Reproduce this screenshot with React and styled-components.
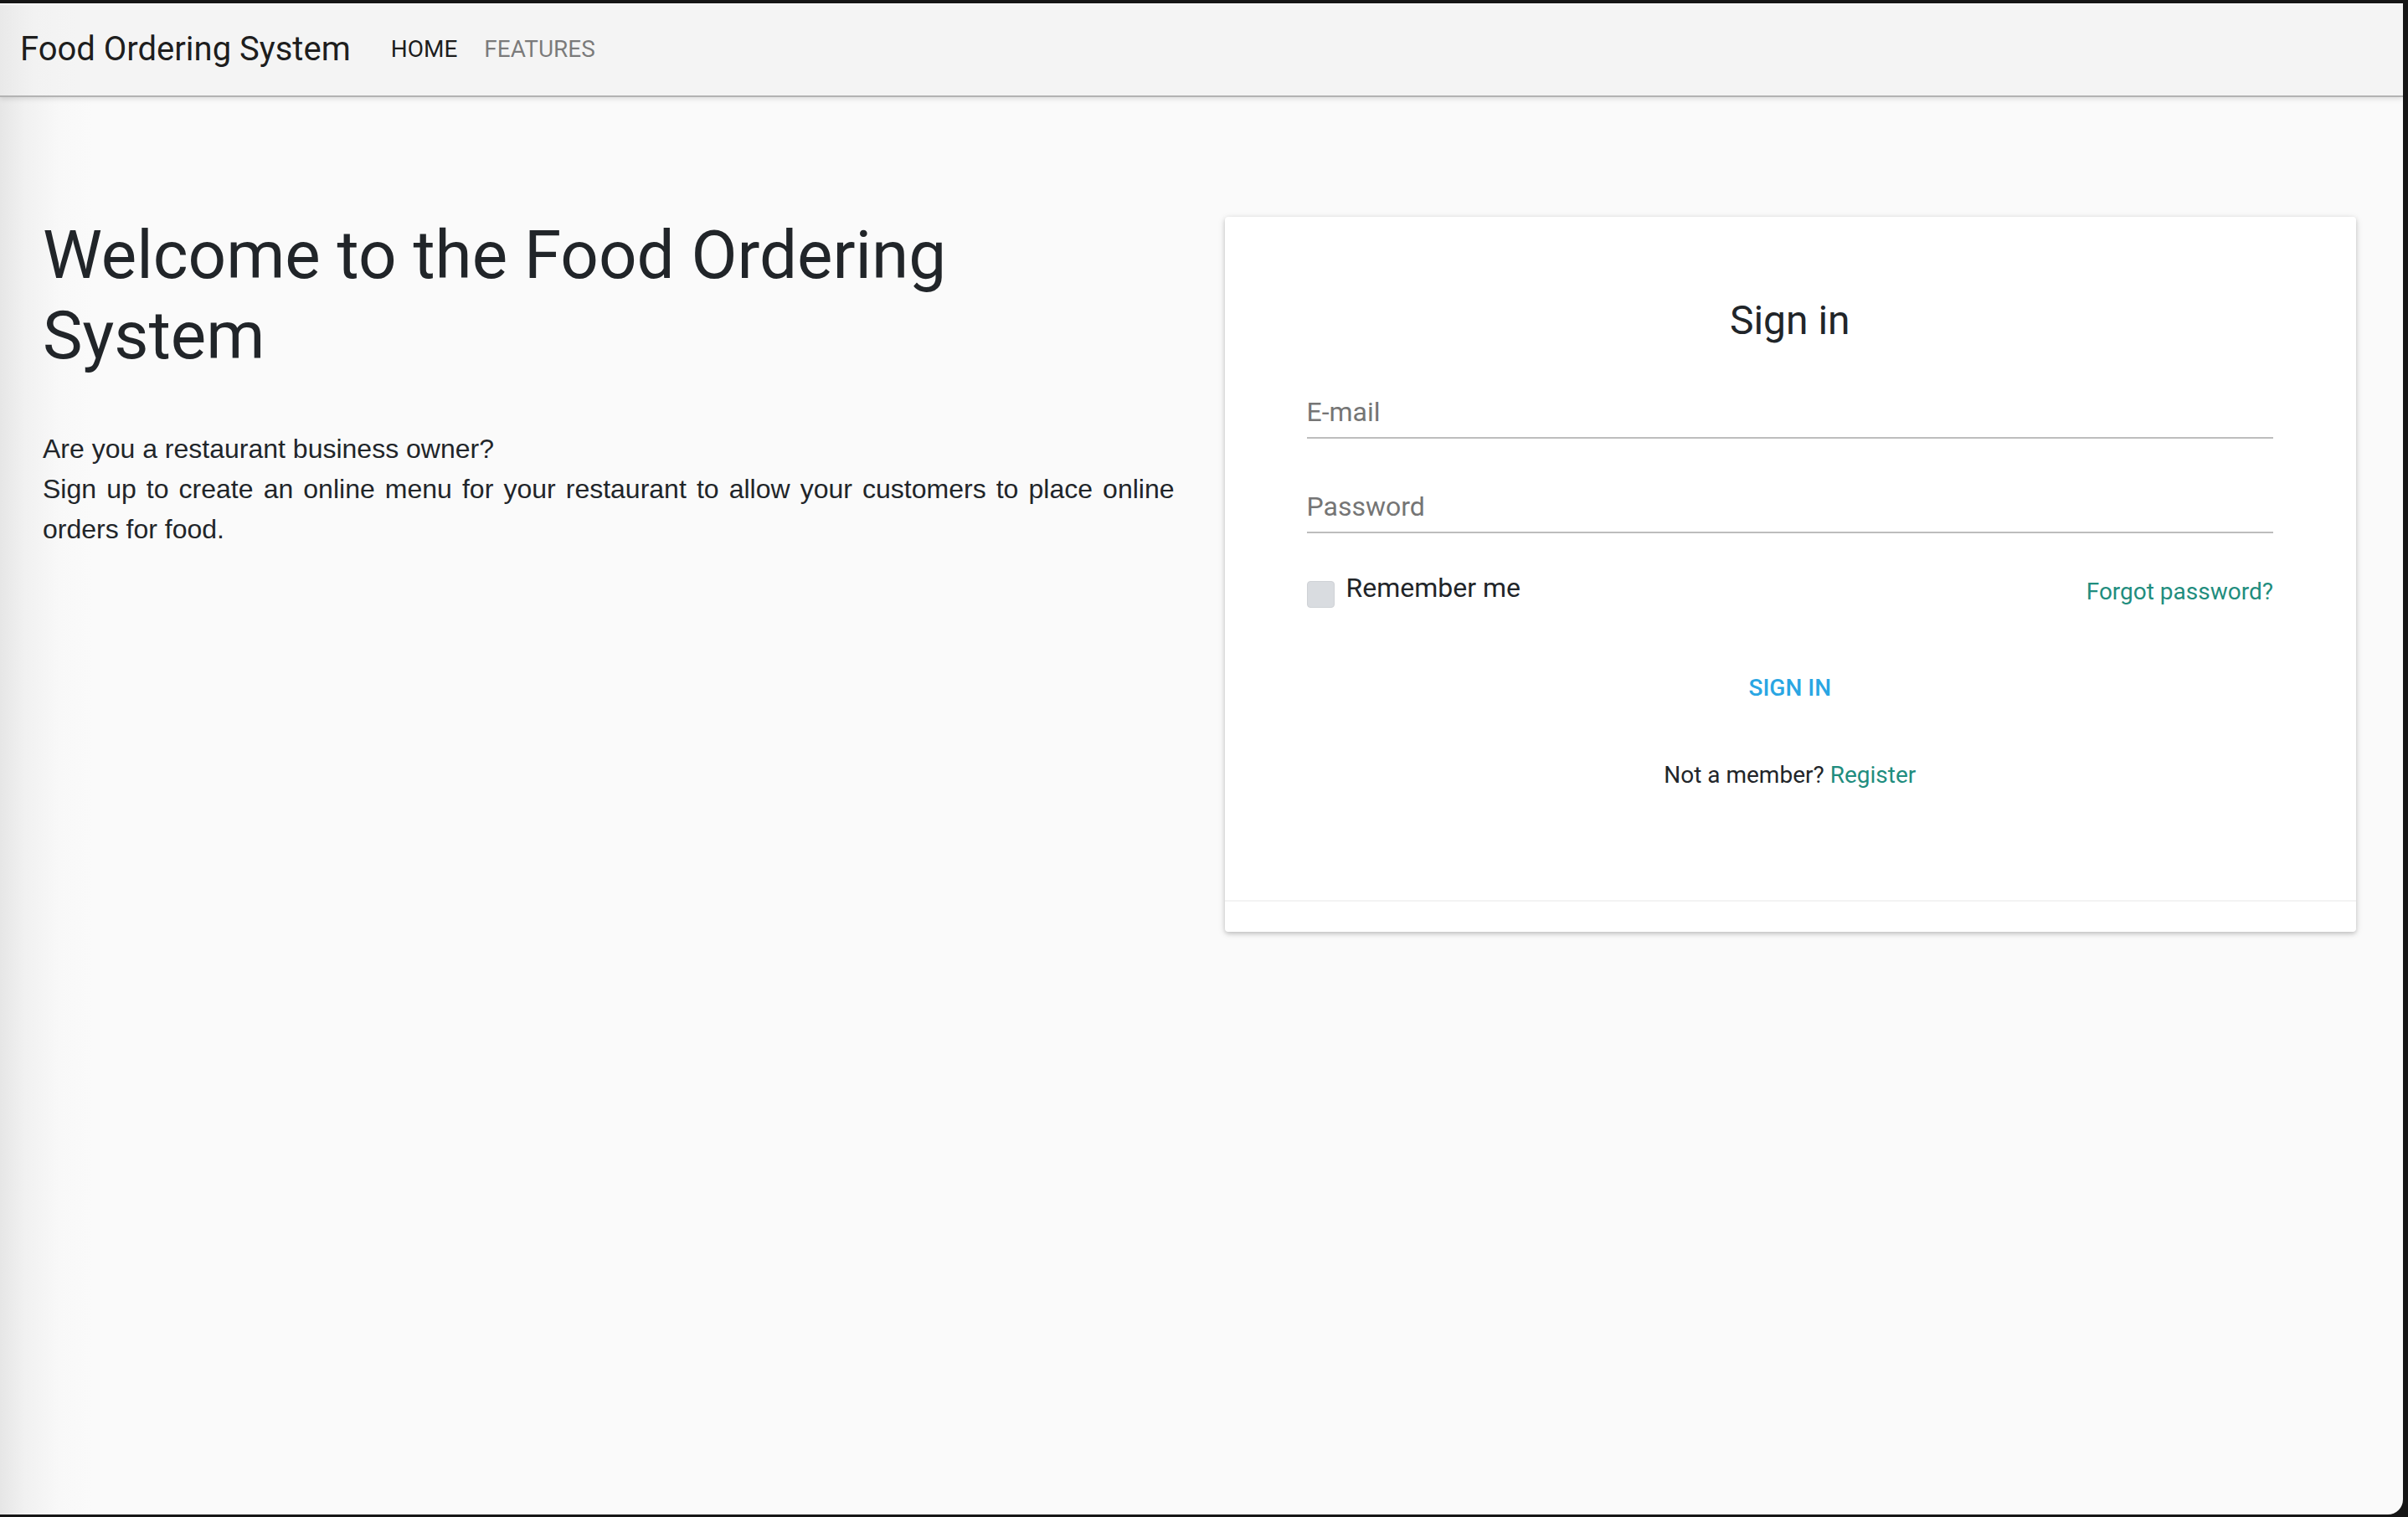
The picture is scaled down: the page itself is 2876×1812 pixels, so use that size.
import styled, { createGlobalStyle } from 'styled-components';

const GlobalStyle = createGlobalStyle`
  html, body {
    margin: 0;
    padding: 0;
    background: #161616;
  }
  body {
    padding: 4px 6px 3px 0;
    font-family: Roboto, "Liberation Sans", sans-serif;
    color: #212529;
  }
  * {
    box-sizing: border-box;
  }
`;

const Window = styled.div`
  height: 1805px;
  background: linear-gradient(to right, #e6e6e6 0, #f1f1f1 30px, #f8f8f8 70px, #fafafa 110px);
  border-bottom-right-radius: 18px;
  border-top: 2px solid #ffffff;
  overflow: hidden;
`;

const Navbar = styled.nav`
  height: 108px;
  display: flex;
  align-items: center;
  padding: 0 0 3px 24px;
  background: linear-gradient(to right, #e9e9e9 0, #f2f2f2 40px, #f4f4f4 90px);
  box-shadow: 0 2px 0 #b3b3b3, 0 4px 6px rgba(0, 0, 0, 0.12);
  position: relative;
`;

const Brand = styled.a`
  font-size: 40px;
  color: rgba(0, 0, 0, 0.9);
  margin-right: 32px;
  text-decoration: none;
`;

const NavLink = styled.a`
  font-size: 28px;
  padding: 0 16px;
  text-transform: uppercase;
  text-decoration: none;
  color: ${(props) => (props.active ? 'rgba(0, 0, 0, 0.9)' : 'rgba(0, 0, 0, 0.5)')};
`;

const Main = styled.main`
  display: grid;
  grid-template-columns: 1fr 1fr;
  column-gap: 60px;
  align-items: start;
  padding: 145px 56px 0 51px;
`;

const Intro = styled.section``;

const Heading = styled.h1`
  font-size: 80px;
  font-weight: 400;
  line-height: 96px;
  margin: -2px 0 63px;
  max-width: 1250px;
  color: #212529;
`;

const Lead = styled.p`
  font-family: "Liberation Sans", Arial, sans-serif;
  font-size: 32px;
  line-height: 48px;
  text-align: justify;
  margin: 0;
  color: #212529;
`;

const Card = styled.div`
  background: #ffffff;
  border-radius: 4px;
  box-shadow: 0 2px 5px 0 rgba(0, 0, 0, 0.16), 0 2px 10px 0 rgba(0, 0, 0, 0.12);
`;

const CardBody = styled.form`
  display: flex;
  flex-direction: column;
  padding: 95px 99px 125px 98px;
`;

const Title = styled.h4`
  font-size: 48px;
  font-weight: 400;
  line-height: 58px;
  text-align: center;
  margin: 0;
  color: #212529;
`;

const Field = styled.div`
  margin-top: ${(props) => props.gap}px;
  padding-bottom: 6px;
  border-bottom: 2px solid #bdbdbd;
`;

const FieldLabel = styled.label`
  display: block;
  font-size: 32px;
  line-height: 48px;
  color: #757575;
`;

const OptionsRow = styled.div`
  display: flex;
  justify-content: space-between;
  align-items: flex-start;
  margin-top: 41px;
`;

const Check = styled.label`
  display: flex;
  align-items: flex-start;
  gap: 14px;
  font-size: 32px;
  line-height: 48px;
  color: #212529;
`;

const Box = styled.span`
  width: 33px;
  height: 32px;
  margin-top: 16px;
  border-radius: 4px;
  background: #d9dce0;
  border: 1px solid #cfd2d6;
`;

const TealLink = styled.a`
  color: #1f8d7e;
  text-decoration: none;
  font-size: 28px;
  line-height: ${(props) => (props.tall ? 58 : 48)}px;
`;

const SignInButton = styled.button`
  align-self: center;
  margin-top: 40px;
  padding: 26px 68px;
  border: none;
  background: transparent;
  font-family: Roboto, sans-serif;
  font-weight: 500;
  font-size: 28px;
  line-height: 40px;
  color: #2aa6e3;
  text-transform: uppercase;
`;

const Footnote = styled.p`
  margin: 34px 0 0;
  text-align: center;
  font-size: 28px;
  line-height: 48px;
  color: #212529;
`;

const CardFooter = styled.div`
  height: 38px;
  border-top: 2px solid #f3f3f3;
`;

export default function App() {
  return (
    <>
      <GlobalStyle />
      <Window>
        <Navbar>
          <Brand href="#">Food Ordering System</Brand>
          <NavLink href="#" active>
            Home
          </NavLink>
          <NavLink href="#">Features</NavLink>
        </Navbar>
        <Main>
          <Intro>
            <Heading>Welcome to the Food Ordering System</Heading>
            <Lead>
              Are you a restaurant business owner?
              <br />
              Sign up to create an online menu for your restaurant to allow your
              customers to place online orders for food.
            </Lead>
          </Intro>
          <Card>
            <CardBody>
              <Title>Sign in</Title>
              <Field gap={56}>
                <FieldLabel>E-mail</FieldLabel>
              </Field>
              <Field gap={57}>
                <FieldLabel>Password</FieldLabel>
              </Field>
              <OptionsRow>
                <Check>
                  <Box />
                  Remember me
                </Check>
                <TealLink href="#" tall>
                  Forgot password?
                </TealLink>
              </OptionsRow>
              <SignInButton type="button">Sign in</SignInButton>
              <Footnote>
                Not a member? <TealLink href="#">Register</TealLink>
              </Footnote>
            </CardBody>
            <CardFooter />
          </Card>
        </Main>
      </Window>
    </>
  );
}
